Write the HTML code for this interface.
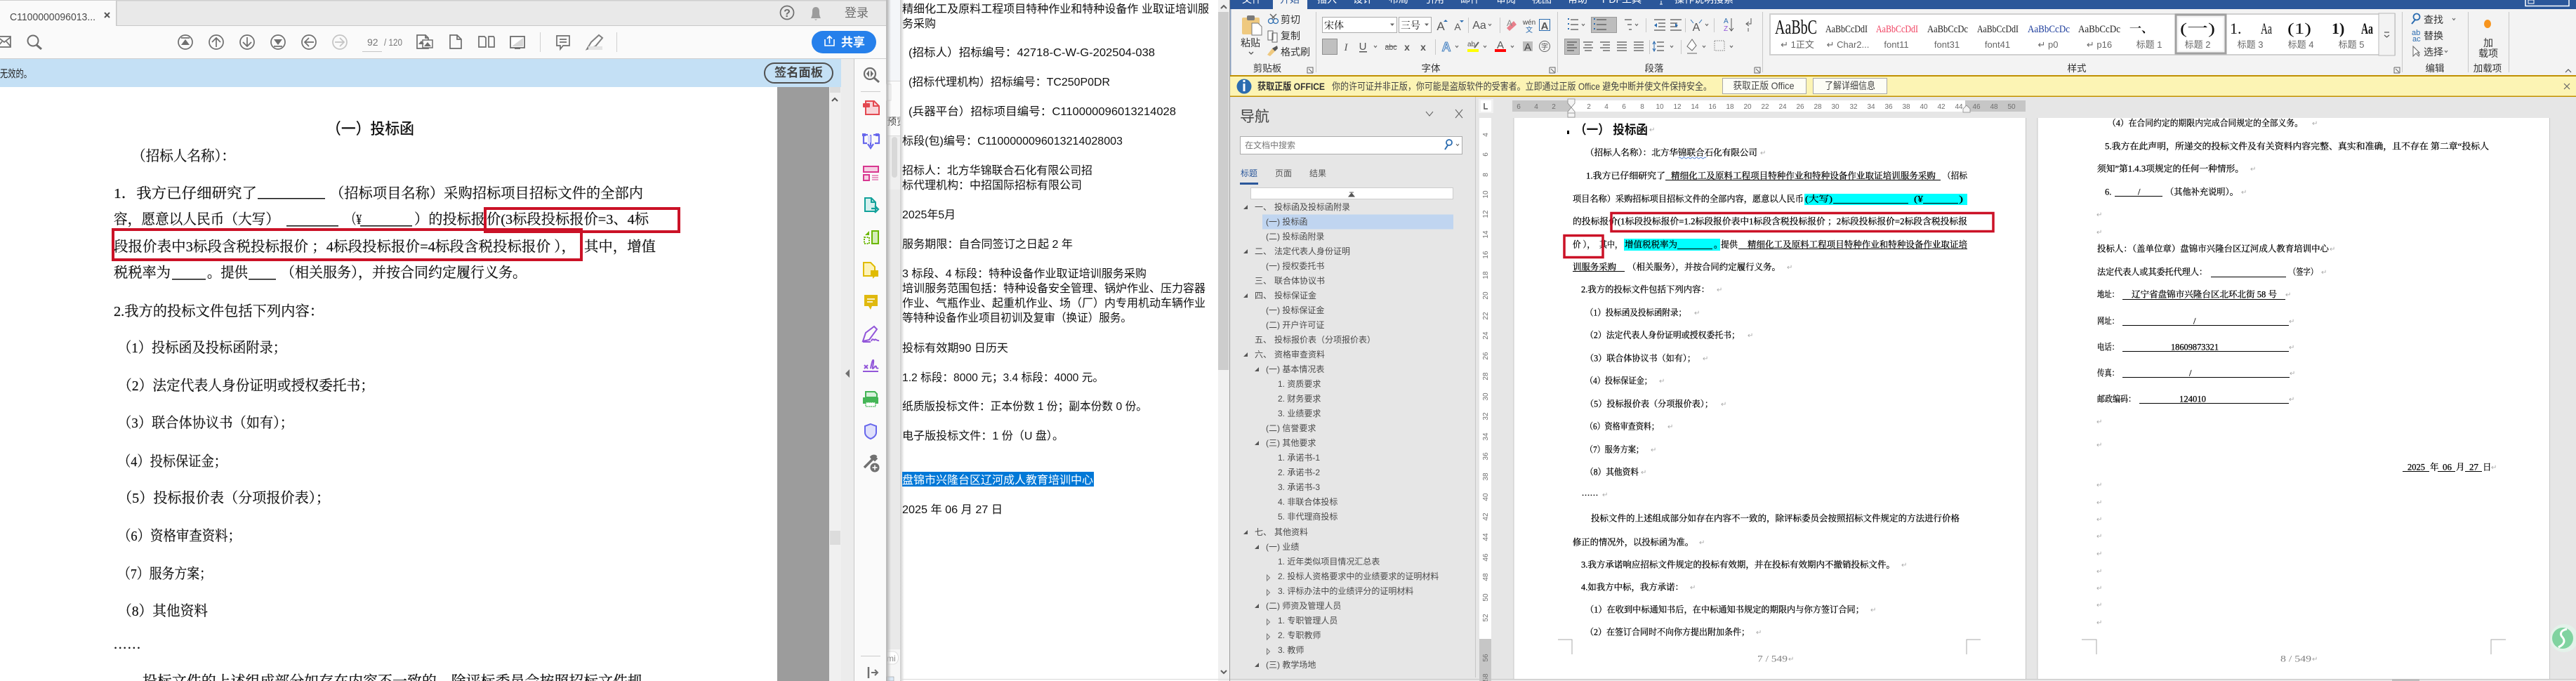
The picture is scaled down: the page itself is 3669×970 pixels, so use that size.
<!DOCTYPE html>
<html lang="zh"><head><meta charset="utf-8"><title>screenshot</title>
<style>
html,body{margin:0;padding:0;background:#e6e6e6;overflow:hidden;width:3669px;height:970px}
svg{display:block}
.s{font-family:"Liberation Serif","Noto Serif CJK SC",serif}
.h{font-family:"Liberation Sans","Noto Sans CJK SC",sans-serif}
.d{font-size:20.5px;fill:#111;stroke:#111;stroke-width:.2px}
.m{font-size:16px;fill:#111}
.w{font-size:12.5px;fill:#000;stroke:#000;stroke-width:.25px}
.n{font-size:12px;fill:#4a4a4a}
.r{font-size:10px;fill:#6e6e6e;text-anchor:middle}
.u{font-size:12px;fill:#444}
.c{text-anchor:middle}
.a{font-family:"DejaVu Sans",sans-serif;font-size:10px;fill:#a8a8a8}
.g{fill:none;stroke:#6e6e6e;stroke-width:1.7}
</style></head><body>
<svg xmlns="http://www.w3.org/2000/svg" width="3669" height="970" viewBox="0 0 3669 970">
<defs>
<linearGradient id="sh" x1="0" x2="1" y1="0" y2="0"><stop offset="0" stop-color="#b5b5b5"/><stop offset="1" stop-color="#b5b5b5" stop-opacity="0"/></linearGradient>
<linearGradient id="sh2" x1="1" x2="0" y1="0" y2="0"><stop offset="0" stop-color="#b5b5b5"/><stop offset="1" stop-color="#b5b5b5" stop-opacity="0"/></linearGradient>
</defs>

<!-- ============ ACROBAT PANEL ============ -->
<rect x="0" y="0" width="1263" height="970" fill="#fff"/>
<rect x="0" y="0" width="1263" height="37" fill="#e9e9e9"/>
<rect x="0" y="0" width="1263" height="1.5" fill="#cfcfcf"/>
<rect x="0" y="1" width="165" height="36" fill="#fafafa"/>
<rect x="165" y="1" width="1.5" height="36" fill="#c8c8c8"/>
<rect x="166" y="36" width="1097" height="1.5" fill="#c8c8c8"/>
<text class="h" x="14" y="29" font-size="15" fill="#4b4b4b" textLength="122" lengthAdjust="spacingAndGlyphs">C1100000096013...</text>
<path d="M149 18l7 7M156 18l-7 7" stroke="#555" stroke-width="2"/>
<rect x="0" y="37" width="1263" height="46" fill="#fafafa"/>
<rect x="0" y="83" width="1263" height="1.5" fill="#cfcfcf"/>
<!-- toolbar left -->
<path class="g" d="M-3 52H15V67H-3ZM-3 53L6 60L15 53M-3 66L3 59M15 66L9 59"/>
<circle class="g" cx="47" cy="58" r="7.5" style="stroke-width:2"/><path d="M52 64L59 70" stroke="#6e6e6e" stroke-width="3"/>
<g class="g">
<circle cx="264" cy="60" r="10"/><circle cx="308" cy="60" r="10"/><circle cx="352" cy="60" r="10"/><circle cx="396" cy="60" r="10"/><circle cx="440" cy="60" r="10"/>
<path d="M258 54H270" /><path d="M308 67V54M302 60L308 54L314 60"/><path d="M352 53V66M346 60L352 66L358 60"/><path d="M390 66H402"/><path d="M447 60H434M440 54L434 60L440 66"/>
</g>
<path d="M264 56L270 64H258Z M396 64L390 56H402Z" fill="#6e6e6e"/>
<g fill="none" stroke="#c4c4c4" stroke-width="1.7"><circle cx="484" cy="60" r="10"/><path d="M477 60H490M484 54L490 60L484 66"/></g>
<text class="h" x="523" y="65" font-size="14" fill="#777">92</text>
<text class="h" x="547" y="65" font-size="14" fill="#777" textLength="26" lengthAdjust="spacingAndGlyphs">/ 120</text>
<rect x="516" y="73" width="28" height="1" fill="#c6c6c6"/>
<path class="g" d="M594 50H606L610 54V69H594ZM606 50V54H610"/><rect x="602" y="57" width="14" height="11" fill="#fafafa" stroke="#6e6e6e" stroke-width="1.5"/><path d="M596 63L600 58L604 63ZM604 66L609 60L614 66Z" fill="#6e6e6e"/>
<path class="g" d="M641 50H651L657 56V69H641ZM651 50V56H657"/>
<path class="g" d="M682 52H690L692 54V67H682ZM696 52H703L704 54V67H696Z"/>
<rect x="727" y="52" width="20" height="16" fill="#fff" stroke="#6e6e6e" stroke-width="1.8"/><path d="M729 66L745 54V66Z" fill="#d6d6d6"/><rect x="733" y="68" width="8" height="2" fill="#6e6e6e"/>
<rect x="769" y="46" width="1" height="28" fill="#d0d0d0"/>
<path class="g" d="M793 51H811V65H802L798 70V65H793ZM797 56H807M797 60H807"/>
<path d="M836 70L842 60L853 50L858 54L848 66Z" fill="#fff" stroke="#808080" stroke-width="2"/><rect x="838" y="66" width="20" height="5" fill="#e4e4e4"/>
<rect x="878" y="46" width="1" height="28" fill="#d0d0d0"/>
<rect x="1156" y="44" width="92" height="32" rx="16" fill="#2680eb"/>
<path d="M1175 56V65H1188V56M1181.500 62V52M1178 55L1181.500 51.500L1185 55" fill="none" stroke="#fff" stroke-width="1.6"/>
<text class="h" x="1198" y="66" font-size="17" font-weight="700" fill="#fff">共享</text>
<circle class="g" cx="1121" cy="18" r="9.500"/><text class="h c" x="1121" y="24" font-size="16" font-weight="700" fill="#6e6e6e">?</text>
<path d="M1155 26C1157 22 1157 20 1157 16C1157 12 1159 10 1162 10C1165 10 1167 12 1167 16C1167 20 1167 22 1169 26ZM1160 27.500H1164L1162 29Z" fill="#9c9c9c"/>
<text class="h" x="1203" y="24" font-size="17" fill="#6e6e6e">登录</text>
<!-- blue band -->
<rect x="0" y="84" width="1198" height="40" fill="#c4e0f5"/>
<text class="h" x="0" y="110" font-size="15" fill="#222" textLength="45" lengthAdjust="spacingAndGlyphs">无效的。</text>
<rect x="1089" y="90" width="97" height="28" rx="14" fill="#c4e0f5" stroke="#505050" stroke-width="2"/>
<text class="h" x="1103" y="109" font-size="17" font-weight="700" fill="#444" textLength="69" lengthAdjust="spacingAndGlyphs">签名面板</text>
<!-- doc -->
<rect x="1107" y="124" width="74" height="846" fill="#9c9c9c"/>
<rect x="1181" y="124" width="17" height="846" fill="#f0f0f0"/>
<rect x="1182" y="124" width="15" height="8" fill="#dcdcdc"/>
<path d="M1185 144L1189 140L1193 144" fill="none" stroke="#555" stroke-width="2"/>
<rect x="1182" y="756" width="15" height="20" fill="#dcdcdc"/>
<rect x="1198" y="84" width="18" height="886" fill="#ececec"/>
<rect x="1216" y="84" width="1.500" height="886" fill="#c8c8c8"/>
<path d="M1210 526V538L1204 532Z" fill="#707070"/>
<rect x="1217" y="84" width="46" height="886" fill="#fafafa"/>
<rect x="1262" y="0" width="1.500" height="970" fill="#bdbdbd"/>

<text class="h" x="465" y="191" font-size="22" font-weight="500" fill="#111" textLength="125" lengthAdjust="spacingAndGlyphs">（一）投标函</text>
<g class="s d">
<text x="188" y="229" textLength="147" lengthAdjust="spacingAndGlyphs">（招标人名称）：</text>
<text x="162" y="282" textLength="204" lengthAdjust="spacingAndGlyphs">1．我方已仔细研究了</text>
<text x="470" y="282" textLength="446" lengthAdjust="spacingAndGlyphs">（招标项目名称）采购招标项目招标文件的全部内</text>
<text x="162" y="319" textLength="236" lengthAdjust="spacingAndGlyphs">容，愿意以人民币（大写）</text>
<text x="492" y="319" textLength="23" lengthAdjust="spacingAndGlyphs">（¥</text>
<text x="590" y="319" textLength="101" lengthAdjust="spacingAndGlyphs">）的投标报</text>
<text x="693" y="319" textLength="231" lengthAdjust="spacingAndGlyphs">价(3标段投标报价=3、4标</text>
<text x="162" y="358" textLength="658" lengthAdjust="spacingAndGlyphs">段报价表中3标段含税投标报价 ；4标段投标报价=4标段含税投标报价 ），</text>
<text x="832" y="358" textLength="102" lengthAdjust="spacingAndGlyphs">其中，增值</text>
<text x="162" y="395" textLength="81" lengthAdjust="spacingAndGlyphs">税税率为</text>
<text x="295" y="395" textLength="58" lengthAdjust="spacingAndGlyphs">。提供</text>
<text x="400" y="395" textLength="350" lengthAdjust="spacingAndGlyphs">（相关服务），并按合同约定履行义务。</text>
<text x="162" y="450" textLength="299" lengthAdjust="spacingAndGlyphs">2.我方的投标文件包括下列内容：</text>
<text x="168" y="502" textLength="240" lengthAdjust="spacingAndGlyphs">（1）投标函及投标函附录；</text>
<text x="168" y="556" textLength="365" lengthAdjust="spacingAndGlyphs">（2）法定代表人身份证明或授权委托书；</text>
<text x="168" y="609" textLength="250" lengthAdjust="spacingAndGlyphs">（3）联合体协议书（如有）；</text>
<text x="168" y="664" textLength="155" lengthAdjust="spacingAndGlyphs">（4）投标保证金；</text>
<text x="168" y="716" textLength="302" lengthAdjust="spacingAndGlyphs">（5）投标报价表（分项报价表）；</text>
<text x="168" y="770" textLength="175" lengthAdjust="spacingAndGlyphs">（6）资格审查资料；</text>
<text x="168" y="824" textLength="134" lengthAdjust="spacingAndGlyphs">（7）服务方案；</text>
<text x="168" y="877" textLength="128" lengthAdjust="spacingAndGlyphs">（8）其他资料</text>
<text x="162" y="924" textLength="38" lengthAdjust="spacing">......</text>
<text x="203" y="977" textLength="712" lengthAdjust="spacingAndGlyphs">投标文件的上述组成部分如存在内容不一致的，除评标委员会按照招标文件规</text>
</g>
<g fill="#111"><rect x="367" y="282" width="96" height="1.500"/><rect x="408" y="321" width="74" height="1.500"/><rect x="513" y="321" width="74" height="1.500"/><rect x="245" y="397" width="48" height="1.500"/><rect x="354" y="397" width="39" height="1.500"/></g>
<rect x="691" y="297" width="276" height="33" fill="none" stroke="#cb1227" stroke-width="4"/>
<rect x="161" y="327" width="667" height="43" fill="none" stroke="#cb1227" stroke-width="4"/>

<!-- sidebar icons -->
<circle class="g" cx="1239" cy="105" r="8" style="stroke-width:2.200"/><path d="M1245 111L1252 117" stroke="#6e6e6e" stroke-width="3"/><path d="M1238 100L1234 105L1238 110ZM1240 100L1244 105L1240 110Z" fill="#6e6e6e"/>
<rect x="1226" y="130" width="28" height="1" fill="#ccc"/>
<path d="M1233 144H1245L1252 151V163H1233Z" fill="#f8d4d8" stroke="#e34850" stroke-width="2"/><rect x="1229" y="147" width="10" height="6" rx="1" fill="#e34850"/><path d="M1244 144V151H1252" fill="none" stroke="#e34850" stroke-width="2"/>
<g fill="none" stroke="#6767ec" stroke-width="2.200"><path d="M1236 192H1230V204H1235M1244 192H1252V204H1246"/><path d="M1240 192V208M1236 205L1240 211L1244 205" /></g><rect x="1236" y="193" width="4" height="10" fill="#dcdcfc"/><rect x="1228" y="190" width="5" height="4" fill="#6767ec"/><rect x="1247" y="190" width="5" height="4" fill="#6767ec"/>
<g stroke="#d83790" stroke-width="2" fill="#f6d0e4"><rect x="1230" y="237" width="21" height="8"/><rect x="1230" y="249" width="8" height="8"/></g><path d="M1242 250H1251M1242 253H1251M1242 256H1251" stroke="#d83790"/>
<path d="M1232 282H1241L1247 288V301H1232Z" fill="#d5f0ee" stroke="#12a19a" stroke-width="2"/><path d="M1241 282V288H1247" fill="none" stroke="#12a19a" stroke-width="2"/><path d="M1241 297H1249M1246 293L1251 298L1246 303" fill="none" stroke="#12a19a" stroke-width="2.200"/>
<rect x="1242" y="329" width="9" height="18" fill="#d4edb8" stroke="#6bb700" stroke-width="2"/><path d="M1231 338H1238V347H1231Z" fill="none" stroke="#6bb700" stroke-width="2" stroke-dasharray="2 1.500"/><path d="M1238 329L1232 335H1238Z" fill="#6bb700"/>
<path d="M1230 374H1240L1246 380V393H1230Z" fill="#fdf3b8" stroke="#e0bb00" stroke-width="2"/><rect x="1240" y="385" width="11" height="9" fill="#e0bb00"/><path d="M1243 394V397L1246 394Z" fill="#e0bb00"/>
<path d="M1231 420H1250V436H1242L1240 441L1237 436H1231Z" fill="#e0b90f"/><path d="M1235 426H1246M1235 430H1243" stroke="#fff" stroke-width="1.500"/>
<path d="M1229 486L1233 474L1245 465L1249 469L1238 484ZM1241 486C1243 480 1245 486 1246 484C1247 482 1249 486 1252 485" fill="none" stroke="#9256d9" stroke-width="2"/><path d="M1229 487H1240" stroke="#9256d9" stroke-width="2"/>
<path d="M1231 520L1236 525M1236 520L1231 525" stroke="#9256d9" stroke-width="2"/><path d="M1240 525C1242 515 1243 512 1244 513C1245 516 1242 524 1243 525C1245 525 1246 520 1248 522C1248 525 1250 525 1251 524" fill="none" stroke="#9256d9" stroke-width="2"/><rect x="1229" y="528" width="22" height="2" fill="#9256d9"/>
<rect x="1229" y="566" width="22" height="9" fill="#44b556"/><path d="M1233 566V558H1246L1249 561V566Z" fill="#d8f0dc" stroke="#44b556" stroke-width="2"/><rect x="1233" y="573" width="14" height="6" fill="#fff" stroke="#44b556" stroke-dasharray="1.500 1" stroke-width="1.500"/>
<path d="M1240 604L1248 607V616C1248 621 1243 624 1240 625C1237 624 1232 621 1232 616V607Z" fill="#dfe0fb" stroke="#6767ec" stroke-width="2"/>
<path d="M1231 666L1243 654L1241 651C1243 649 1246 649 1247 650L1244 653L1246 655L1249 652" fill="none" stroke="#707070" stroke-width="3.500"/><circle cx="1246" cy="666" r="6.500" fill="#707070"/><path d="M1246 662.500V669.500M1242.500 666H1249.500" stroke="#fff" stroke-width="1.500"/>
<rect x="1226" y="934" width="28" height="1" fill="#ccc"/>
<path d="M1237 950V966" stroke="#707070" stroke-width="2.500"/><path d="M1241 958H1249M1246 954L1250 958L1246 962" fill="none" stroke="#707070" stroke-width="2"/>

<!-- ============ SLIVER between windows ============ -->
<rect x="1263" y="0" width="19" height="970" fill="#e9e9e9"/>
<rect x="1263" y="0" width="19" height="115" fill="#f4f6f9"/>
<rect x="1263" y="115" width="19" height="78" fill="#fbfbfb"/>
<rect x="1263" y="115" width="19" height="1" fill="#dadada"/>
<rect x="1263" y="120" width="6" height="23" fill="#fff" stroke="#ddd"/>
<text class="h" x="1263" y="178" font-size="14" fill="#444">预览</text>
<rect x="1263" y="193" width="19" height="1" fill="#dadada"/>
<rect x="1263" y="194" width="19" height="76" fill="#efefef"/>
<rect x="1270" y="195" width="8" height="58" rx="4" fill="#d8d8d8"/>
<rect x="1263" y="925" width="19" height="45" fill="#f6f6f6"/>
<path d="M1263 928H1272C1282 928 1282 946 1272 946H1263" fill="#fff" stroke="#ddd"/>
<text class="h" x="1263" y="942" font-size="12" fill="#888">mi</text>
<rect x="1263" y="964" width="10" height="6" fill="#dbe8f5" stroke="#888" stroke-width=".5"/>
<rect x="1263" y="0" width="6" height="970" fill="url(#sh)"/>

<!-- ============ TEXT VIEWER ============ -->
<rect x="1282" y="0" width="453" height="970" fill="#fff"/>
<rect x="1282" y="0" width="6" height="970" fill="url(#sh)" opacity=".7"/>
<rect x="1735" y="0" width="17" height="970" fill="#f0f0f0"/>
<rect x="1735" y="17" width="15" height="510" fill="#cdcdcd"/>
<path d="M1739 12L1743 8L1747 12M1739 955L1743 959L1747 955" fill="none" stroke="#606060" stroke-width="2"/>
<rect x="1282" y="967" width="470" height="1" fill="#d8d8d8"/>
<rect x="1751" y="0" width="1.500" height="970" fill="#9b9b9b"/>
<g class="h m">
<text x="1285" y="18" textLength="437" lengthAdjust="spacingAndGlyphs">精细化工及原料工程项目特种作业和特种设备作 业取证培训服</text>
<text x="1285" y="39" textLength="48" lengthAdjust="spacingAndGlyphs">务采购</text>
<text x="1294" y="80" textLength="351" lengthAdjust="spacingAndGlyphs">(招标人）招标编号：42718-C-W-G-202504-038</text>
<text x="1294" y="122" textLength="287" lengthAdjust="spacingAndGlyphs">(招标代理机构）招标编号：TC250P0DR</text>
<text x="1294" y="164" textLength="381" lengthAdjust="spacingAndGlyphs">(兵器平台）招标项目编号：C110000096013214028</text>
<text x="1285" y="206" textLength="314" lengthAdjust="spacingAndGlyphs">标段(包)编号：C1100000096013214028003</text>
<text x="1285" y="248" textLength="271" lengthAdjust="spacingAndGlyphs">招标人：北方华锦联合石化有限公司招</text>
<text x="1285" y="269" textLength="256" lengthAdjust="spacingAndGlyphs">标代理机构：中招国际招标有限公司</text>
<text x="1285" y="311" textLength="76" lengthAdjust="spacingAndGlyphs">2025年5月</text>
<text x="1285" y="353" textLength="243" lengthAdjust="spacingAndGlyphs">服务期限：自合同签订之日起 2 年</text>
<text x="1285" y="395" textLength="348" lengthAdjust="spacingAndGlyphs">3 标段、4 标段：特种设备作业取证培训服务采购</text>
<text x="1285" y="416" textLength="432" lengthAdjust="spacingAndGlyphs">培训服务范围包括：特种设备安全管理、锅炉作业、压力容器</text>
<text x="1285" y="437" textLength="432" lengthAdjust="spacingAndGlyphs">作业、气瓶作业、起重机作业、场（厂）内专用机动车辆作业</text>
<text x="1285" y="458" textLength="327" lengthAdjust="spacingAndGlyphs">等特种设备作业项目初训及复审（换证）服务。</text>
<text x="1285" y="501" textLength="151" lengthAdjust="spacingAndGlyphs">投标有效期90 日历天</text>
<text x="1285" y="543" textLength="287" lengthAdjust="spacingAndGlyphs">1.2 标段：8000 元；3.4 标段：4000 元。</text>
<text x="1285" y="584" textLength="349" lengthAdjust="spacingAndGlyphs">纸质版投标文件：正本份数 1 份；副本份数 0 份。</text>
<text x="1285" y="626" textLength="230" lengthAdjust="spacingAndGlyphs">电子版投标文件：1 份（U 盘）。</text>
<text x="1285" y="731" textLength="143" lengthAdjust="spacingAndGlyphs">2025 年 06 月 27 日</text>
</g>
<rect x="1285" y="672" width="273" height="21" fill="#0078d7"/>
<text class="h" x="1285" y="689" font-size="16" fill="#fff" textLength="272" lengthAdjust="spacingAndGlyphs">盘锦市兴隆台区辽河成人教育培训中心</text>

<!-- ============ WORD ============ -->
<rect x="1752" y="0" width="1917" height="970" fill="#e6e6e6"/>
<rect x="1752" y="0" width="1917" height="13" fill="#2b579a"/>
<rect x="1813" y="0" width="49" height="13" fill="#f3f3f3"/>
<g class="h" font-size="14" fill="#fff">
<text x="1769" y="4">文件</text><text x="1823" y="4" fill="#2b579a">开始</text><text x="1876" y="4">插入</text><text x="1927" y="4">设计</text><text x="1978" y="4">布局</text><text x="2029" y="4">引用</text><text x="2080" y="4">邮件</text><text x="2131" y="4">审阅</text><text x="2182" y="4">视图</text><text x="2233" y="4">帮助</text><text x="2282" y="4">PDF工具</text><text x="2385" y="4">操作说明搜索</text>
</g>
<path d="M2366 1V6M2364 6H2368" stroke="#fff"/>
<path d="M3597 0V8.500H3659V0" fill="none" stroke="#fff" stroke-width="1.500"/>
<rect x="3601" y="0" width="8" height="5" fill="none" stroke="#fff"/>
<rect x="1752" y="13" width="1917" height="94" fill="#f3f3f3"/>
<rect x="1752" y="13" width="1.500" height="94" fill="#2b579a" opacity=".5"/>
<!-- dividers -->
<g fill="#c8c8c8"><rect x="1874" y="17" width="1" height="86"/><rect x="2218" y="17" width="1" height="86"/><rect x="2510" y="17" width="1" height="86"/><rect x="3421" y="17" width="1" height="86"/><rect x="3515" y="17" width="1" height="86"/><rect x="3573" y="17" width="1" height="86"/>
<rect x="2091" y="25" width="1" height="22"/><rect x="2136" y="25" width="1" height="22"/><rect x="2044" y="56" width="1" height="22"/><rect x="2344" y="26" width="1" height="20"/><rect x="2400" y="26" width="1" height="20"/><rect x="2441" y="26" width="1" height="20"/><rect x="2349" y="57" width="1" height="20"/><rect x="2394" y="57" width="1" height="20"/></g>
<!-- clipboard -->
<rect x="1769" y="25" width="25" height="24" rx="2" fill="#efc97f"/><rect x="1776" y="22" width="11" height="7" rx="2" fill="#7a7a7a"/>
<path d="M1783 33H1792L1797 38V50H1783Z" fill="#fff" stroke="#777"/>
<text class="h c" x="1781" y="66" font-size="14" fill="#333">粘贴</text>
<path d="M1779 74L1782 77L1785 74" fill="none" stroke="#555" stroke-width="1.300"/>
<circle cx="1810" cy="30" r="3.500" fill="none" stroke="#2b6cb0" stroke-width="1.300"/><circle cx="1817" cy="30" r="3.500" fill="none" stroke="#2b6cb0" stroke-width="1.300"/><path d="M1809 20L1816 27M1818 20L1811 27" stroke="#666" stroke-width="1.500"/>
<path d="M1806 44H1813V57H1806ZM1812 47H1819V60H1812Z" fill="#fff" stroke="#666"/>
<path d="M1805 78L1812 69L1816 73L1809 80Z" fill="#efc97f"/><path d="M1812 69L1819 65L1820 69L1816 73Z" fill="#555"/>
<g class="h" font-size="14" fill="#333"><text x="1824" y="33">剪切</text><text x="1824" y="56">复制</text><text x="1824" y="79">格式刷</text></g>
<g class="h c" font-size="13.500" fill="#333"><text x="1805" y="102">剪贴板</text><text x="2038" y="102">字体</text><text x="2356" y="102">段落</text><text x="2958" y="102">样式</text><text x="3468" y="102">编辑</text><text x="3543" y="102">加载项</text></g>
<g fill="none" stroke="#666"><path d="M1862 96H1870V104M1862 96V104H1870M1864 98L1869 103"/><path d="M2207 96H2215V104M2207 96V104H2215M2209 98L2214 103"/><path d="M2499 96H2507V104M2499 96V104H2507M2501 98L2506 103"/><path d="M3410 96H3418V104M3410 96V104H3418M3412 98L3417 103"/></g>
<!-- font group -->
<rect x="1883.500" y="24.500" width="106" height="22" fill="#fff" stroke="#ababab"/><rect x="1992.500" y="24.500" width="46" height="22" fill="#fff" stroke="#ababab"/>
<text class="s" x="1886" y="41" font-size="14" fill="#111">宋体</text><text class="s" x="1995" y="41" font-size="14" fill="#111">三号</text>
<path d="M1980 33.500H1986L1983 37ZM2029 33.500H2035L2032 37Z" fill="#666"/>
<g class="h" fill="#555"><text class="c" x="2052" y="43" font-size="17">A</text><text class="c" x="2076" y="43" font-size="14">A</text><text class="c" x="2107" y="41" font-size="16">Aa</text><text class="c" x="2200" y="42" font-size="15" font-weight="700">A</text>
<text class="c" x="1894" y="72" font-size="15" font-weight="700">B</text><text class="c" x="1917" y="72" font-size="15" font-style="italic" font-family="Liberation Serif">I</text><text class="c" x="1941" y="71" font-size="15">U</text><text class="c" x="1981" y="71" font-size="12" textLength="17" lengthAdjust="spacingAndGlyphs">abc</text><text class="c" x="2004" y="72" font-size="14" font-weight="700">x</text><text class="c" x="2027" y="72" font-size="14" font-weight="700">x</text></g>
<path d="M2056 31L2059 28L2062 31" fill="#2b6cb0"/><path d="M2079 29H2085L2082 32Z" fill="#2b6cb0"/>
<rect x="2192.500" y="27.500" width="15" height="16" fill="none" stroke="#2b6cb0"/>
<path d="M2146 40L2156 30L2160 35L2150 44Z" fill="#e87e8a"/><text class="h" x="2146" y="37" font-size="12" fill="#888">A</text>
<text class="h c" x="2178" y="35" font-size="10" fill="#444">wén</text><text class="h c" x="2178" y="46" font-size="10" fill="#2b6cb0">文</text>
<rect x="1883.500" y="55.500" width="21" height="22" fill="#c0c0c0" stroke="#8f8f8f"/>
<rect x="1936" y="73" width="11" height="1.500" fill="#555"/><path d="M1973 66H1990" stroke="#555"/>
<text class="h c" x="2060" y="73" font-size="18" font-weight="700" fill="#cfe0f5" stroke="#2b6cb0" stroke-width=".8">A</text>
<text class="h" x="2090" y="66" font-size="10" fill="#555">ab</text><path d="M2100 68L2106 60" stroke="#666" stroke-width="2"/><rect x="2090" y="70" width="16" height="4" fill="#ffff00"/>
<text class="h c" x="2137" y="69" font-size="15" fill="#555">A</text><rect x="2129" y="70" width="16" height="4" fill="#f00"/>
<rect x="2169" y="59" width="14" height="14" fill="#bdbdbd"/><text class="h c" x="2176" y="72" font-size="15" fill="#444">A</text>
<circle cx="2200" cy="66" r="7.500" fill="none" stroke="#666"/><text class="h c" x="2200" y="70" font-size="10" fill="#555">字</text>
<g fill="none" stroke="#666" stroke-width="1.100"><path d="M2120 34L2122 36.500L2124 34M1957 65L1959 67.500L1961 65M2073 65L2075 67.500L2077 65M2113 65L2115 67.500L2117 65M2152 65L2154 67.500L2156 65M2253 34L2255 36.500L2257 34M2293 34L2295 36.500L2297 34M2329 34L2331 36.500L2333 34M2429 34L2431 36.500L2433 34M2379 65L2381 67.500L2383 65M2425 65L2427 67.500L2429 65M2464 65L2466 67.500L2468 65M3493 26L3495 28.500L3497 26M3482 72L3484 74.500L3486 72"/></g>
<!-- paragraph -->
<rect x="2266.500" y="24.500" width="36" height="22" fill="#bdbdbd" stroke="#9a9a9a"/><rect x="2228.500" y="55.500" width="21" height="22" fill="#bdbdbd" stroke="#9a9a9a"/>
<g stroke="#555" stroke-width="1.200"><path d="M2237 28H2248M2237 35H2248M2237 42H2248M2274 28H2288M2274 35H2288M2274 42H2288M2314 28H2324M2318 35H2324M2320 42H2324"/><path d="M2356 28H2372M2362 33H2372M2362 38H2372M2356 43H2372M2379 28H2395M2379 33H2389M2379 38H2389M2379 43H2395"/>
<path d="M2232 60H2246M2232 64H2242M2232 68H2246M2232 72H2242M2255 60H2269M2257 64H2267M2255 68H2269M2257 72H2267M2279 60H2293M2283 64H2293M2279 68H2293M2283 72H2293M2303 60H2317M2303 64H2317M2303 68H2317M2303 72H2317M2327 60H2341M2327 64H2341M2327 68H2341M2327 72H2341M2360 60H2370M2360 66H2370M2360 72H2370"/></g>
<path d="M2233 26h2v2h-2zM2233 33h2v2h-2zM2233 40h2v2h-2zM2270 26h2v2h-2zM2270 33h2v2h-2zM2270 40h2v2h-2z" fill="#2b6cb0"/>
<path d="M2354 63L2356 59L2358 63M2356 60V72M2354 69L2356 73L2358 69" fill="none" stroke="#2b6cb0"/>
<path d="M2360 33L2356 36L2360 39Z M2386 33L2390 36L2386 39Z" fill="#2b6cb0"/>
<text class="h c" x="2416" y="44" font-size="16" fill="#555">A</text><path d="M2408 28L2412 33M2424 28L2420 33" stroke="#2b6cb0"/>
<text class="h" x="2455" y="33" font-size="10" fill="#2b6cb0">A</text><text class="h" x="2455" y="44" font-size="10" fill="#9256d9">Z</text><path d="M2466 26V43M2463 40L2466 44L2469 40" fill="none" stroke="#555"/>
<path d="M2494 26V34H2488M2491 31L2487 34L2491 37M2490 40V45" fill="none" stroke="#555"/>
<path d="M2410 56L2403 66L2410 72L2416 65ZM2403 76H2417" fill="#fff" stroke="#666"/>
<rect x="2442" y="58" width="14" height="14" fill="none" stroke="#777" stroke-dasharray="1.500 1.500"/>
<!-- styles gallery -->
<rect x="2521" y="20" width="890" height="58" fill="#fff" stroke="#d0d0d0" stroke-width="2"/>
<rect x="3099" y="21" width="71" height="55" fill="#f5f5f5" stroke="#a0a0a0" stroke-width="3"/>
<rect x="3103" y="25" width="63" height="47" fill="#fff"/>
<g class="s">
<text x="2528" y="48" font-size="28" fill="#111" textLength="60" lengthAdjust="spacingAndGlyphs">AaBbC</text>
<text x="2600" y="46" font-size="15" fill="#222" textLength="60" lengthAdjust="spacingAndGlyphs">AaBbCcDdI</text>
<text x="2672" y="46" font-size="15" fill="#f04060" textLength="60" lengthAdjust="spacingAndGlyphs">AaBbCcDdI</text>
<text x="2745" y="46" font-size="15" fill="#222" textLength="58" lengthAdjust="spacingAndGlyphs">AaBbCcDc</text>
<text x="2816" y="46" font-size="15" fill="#222" textLength="59" lengthAdjust="spacingAndGlyphs">AaBbCcDdI</text>
<text x="2888" y="46" font-size="15" fill="#1a3a9a" textLength="60" lengthAdjust="spacingAndGlyphs">AaBbCcDc</text>
<text x="2960" y="46" font-size="15" fill="#222" textLength="60" lengthAdjust="spacingAndGlyphs">AaBbCcDc</text>
<text x="3033" y="46" font-size="17" fill="#111" font-weight="700">一、</text>
<text x="3105" y="48" font-size="22" fill="#111" textLength="50" lengthAdjust="spacingAndGlyphs">(一)</text>
<text x="3176" y="48" font-size="22" fill="#111">1.</text>
<text x="3220" y="48" font-size="22" fill="#111" textLength="16" lengthAdjust="spacingAndGlyphs">Aa</text>
<text x="3258" y="48" font-size="22" fill="#111" textLength="34" lengthAdjust="spacingAndGlyphs">(1)</text>
<text x="3321" y="48" font-size="22" fill="#111" font-weight="700">1)</text>
<text x="3363" y="48" font-size="22" fill="#111" font-weight="700" textLength="17" lengthAdjust="spacingAndGlyphs">Aa</text>
</g>
<g class="h c" font-size="13" fill="#666">
<text x="2560" y="68">↵ 1正文</text><text x="2632" y="68">↵ Char2...</text><text x="2701" y="68">font11</text><text x="2773" y="68">font31</text><text x="2845" y="68">font41</text><text x="2917" y="68">↵ p0</text><text x="2990" y="68">↵ p16</text><text x="3061" y="68">标题 1</text><text x="3130" y="68">标题 2</text><text x="3205" y="68">标题 3</text><text x="3277" y="68">标题 4</text><text x="3349" y="68">标题 5</text>
</g>
<rect x="3388" y="19" width="23" height="60" fill="#f3f3f3" stroke="#b8b8b8"/>
<path d="M3396 46H3403M3396 50L3399.500 53L3403 50" fill="none" stroke="#555" stroke-width="1.200"/>
<!-- editing -->
<circle cx="3442" cy="24" r="4.500" fill="none" stroke="#2b6cb0" stroke-width="1.800"/><path d="M3440 28L3435 34" stroke="#2b6cb0" stroke-width="2"/>
<text class="h" x="3435" y="50" font-size="11" fill="#2b6cb0">ab</text><text class="h" x="3436" y="59" font-size="11" fill="#2b6cb0">ac</text>
<path d="M3437 66V80L3441 76L3445 80L3446 78L3443 75H3446Z" fill="#fff" stroke="#666"/>
<g class="h" font-size="14" fill="#333"><text x="3452" y="33">查找</text><text x="3452" y="56">替换</text><text x="3452" y="79">选择</text></g>
<ellipse cx="3543" cy="34" rx="5" ry="6" fill="#f7941d"/>
<text class="h c" x="3544" y="66" font-size="14" fill="#333">加</text><text class="h c" x="3544" y="81" font-size="14" fill="#333">载项</text>
<path d="M3654 103L3658 99L3662 103" fill="none" stroke="#555" stroke-width="1.200"/>
<!-- yellow bar -->
<rect x="1752" y="107" width="1917" height="31" fill="#c09000"/>
<rect x="1752" y="109" width="1917" height="27.500" fill="#fcf4b4"/>
<circle cx="1772" cy="123" r="10.500" fill="#2b6cb0"/><rect x="1770.500" y="119" width="3" height="11" fill="#fff"/><rect x="1770.500" y="114" width="3" height="3" fill="#fff"/>
<text class="h" x="1791" y="128" font-size="14" font-weight="700" fill="#333" textLength="96" lengthAdjust="spacingAndGlyphs">获取正版 OFFICE</text>
<text class="h" x="1897" y="128" font-size="14" fill="#444" textLength="541" lengthAdjust="spacingAndGlyphs">你的许可证并非正版，你可能是盗版软件的受害者。立即通过正版 Office 避免中断并使文件保持安全。</text>
<rect x="2453.500" y="111.500" width="119" height="22" fill="#fdfdf5" stroke="#a8a8a8"/><rect x="2582.500" y="111.500" width="105" height="22" fill="#fdfdf5" stroke="#a8a8a8"/>
<text class="h c" x="2512" y="127" font-size="14" fill="#444" textLength="87" lengthAdjust="spacingAndGlyphs">获取正版 Office</text>
<text class="h c" x="2635" y="127" font-size="14" fill="#444" textLength="72" lengthAdjust="spacingAndGlyphs">了解详细信息</text>
<path d="M3652 119L3660 127M3660 119L3652 127" stroke="#666" stroke-width="1.200"/>

<!-- nav pane -->
<rect x="1752" y="138" width="349" height="832" fill="#e6e6e6"/>
<rect x="2101" y="138" width="1" height="827" fill="#c6c6c6"/>
<text class="h" x="1766" y="173" font-size="21" fill="#444">导航</text>
<path d="M2031 159L2036 165L2041 159M2073 156L2083 168M2083 156L2073 168" fill="none" stroke="#666" stroke-width="1.100"/>
<rect x="1766.500" y="194.500" width="316" height="25" fill="#fff" stroke="#ababab"/>
<text class="h" x="1773" y="211" font-size="12" fill="#777">在文档中搜索</text>
<circle cx="2064" cy="203" r="4" fill="none" stroke="#2b6cb0" stroke-width="1.800"/><path d="M2062 207L2058 213" stroke="#2b6cb0" stroke-width="2"/><path d="M2074 205L2076 207.500L2078 205" fill="none" stroke="#555"/>
<text class="h" x="1767" y="251" font-size="12" fill="#2b579a">标题</text><text class="h" x="1816" y="251" font-size="12" fill="#555">页面</text><text class="h" x="1865" y="251" font-size="12" fill="#555">结果</text>
<rect x="1766" y="260" width="26" height="3" fill="#2b579a"/>
<rect x="1781.500" y="267.500" width="288" height="16" fill="#fff" stroke="#ccc"/>
<path d="M1922 274H1928M1925 275L1921 280H1929Z" stroke="#555" fill="#555"/>
<rect x="1798" y="305.500" width="272" height="21" fill="#c0d5f0"/>
<g class="h n">
<text x="1787" y="299">一、</text><text x="1815" y="299">投标函及投标函附录</text>
<text x="1803" y="320">(一) 投标函</text>
<text x="1803" y="341">(二) 投标函附录</text>
<text x="1787" y="362">二、</text><text x="1815" y="362">法定代表人身份证明</text>
<text x="1803" y="383">(一) 授权委托书</text>
<text x="1787" y="404">三、</text><text x="1815" y="404">联合体协议书</text>
<text x="1787" y="425">四、</text><text x="1815" y="425">投标保证金</text>
<text x="1803" y="446">(一) 投标保证金</text>
<text x="1803" y="467">(二) 开户许可证</text>
<text x="1787" y="488">五、</text><text x="1815" y="488">投标报价表（分项报价表）</text>
<text x="1787" y="509">六、</text><text x="1815" y="509">资格审查资料</text>
<text x="1803" y="530">(一) 基本情况表</text>
<text x="1820" y="551">1. 资质要求</text>
<text x="1820" y="572">2. 财务要求</text>
<text x="1820" y="593">3. 业绩要求</text>
<text x="1803" y="614">(二) 信誉要求</text>
<text x="1803" y="635">(三) 其他要求</text>
<text x="1820" y="656">1. 承诺书-1</text>
<text x="1820" y="677">2. 承诺书-2</text>
<text x="1820" y="698">3. 承诺书-3</text>
<text x="1820" y="719">4. 非联合体投标</text>
<text x="1820" y="740">5. 非代理商投标</text>
<text x="1787" y="762">七、</text><text x="1815" y="762">其他资料</text>
<text x="1803" y="783">(一) 业绩</text>
<text x="1820" y="804">1. 近年类似项目情况汇总表</text>
<text x="1820" y="825">2. 投标人资格要求中的业绩要求的证明材料</text>
<text x="1820" y="846">3. 评标办法中的业绩评分的证明材料</text>
<text x="1803" y="867">(二) 师资及管理人员</text>
<text x="1820" y="888">1. 专职管理人员</text>
<text x="1820" y="909">2. 专职教师</text>
<text x="1820" y="930">3. 教师</text>
<text x="1803" y="951">(三) 教学场地</text>
</g>
<g fill="#555">
<path d="M1771 298L1777 292V298ZM1771 361L1777 355V361ZM1771 424L1777 418V424ZM1771 508L1777 502V508ZM1771 761L1777 755V761Z"/>
<path d="M1787 529L1793 523V529ZM1787 634L1793 628V634ZM1787 782L1793 776V782ZM1787 866L1793 860V866ZM1787 950L1793 944V950Z"/>
</g>
<g fill="none" stroke="#777"><path d="M1804.500 819L1808.500 823L1804.500 827ZM1804.500 840L1808.500 844L1804.500 848ZM1804.500 882L1808.500 886L1804.500 890ZM1804.500 903L1808.500 907L1804.500 911ZM1804.500 924L1808.500 928L1804.500 932Z"/></g>

<!-- rulers -->
<rect x="2106" y="141" width="21" height="20" fill="#f1f1f1"/><rect x="2109" y="143" width="15" height="16" fill="#fff"/><path d="M2114 147V155H2119" fill="none" stroke="#555" stroke-width="1.500"/>
<rect x="2154" y="143" width="84" height="16" fill="#c6c6c6"/><rect x="2238" y="143" width="561" height="16" fill="#fff"/><rect x="2799" y="143" width="86" height="16" fill="#c6c6c6"/>
<g class="h r">
<text x="2163" y="155">6</text><text x="2188" y="155">4</text><text x="2213" y="155">2</text>
<text x="2263" y="155">2</text><text x="2288" y="155">4</text><text x="2313" y="155">6</text><text x="2339" y="155">8</text><text x="2364" y="155">10</text><text x="2389" y="155">12</text><text x="2414" y="155">14</text><text x="2439" y="155">16</text><text x="2464" y="155">18</text><text x="2489" y="155">20</text><text x="2514" y="155">22</text><text x="2539" y="155">24</text><text x="2564" y="155">26</text><text x="2589" y="155">28</text><text x="2614" y="155">30</text><text x="2640" y="155">32</text><text x="2665" y="155">34</text><text x="2690" y="155">36</text><text x="2715" y="155">38</text><text x="2740" y="155">40</text><text x="2765" y="155">42</text><text x="2790" y="155">44</text><text x="2815" y="155">46</text><text x="2840" y="155">48</text><text x="2865" y="155">50</text>
</g>
<path d="M2233 141H2243V147L2238 153L2243 159V167H2233V159L2238 153L2233 147Z" fill="#f4f4f4" stroke="#888" stroke-width=".8"/><path d="M2233 161H2243" stroke="#888" stroke-width=".8"/>
<path d="M2796 160V155L2801 150L2806 155V160Z" fill="#f4f4f4" stroke="#888" stroke-width=".8"/>
<rect x="2107" y="168" width="17" height="742" fill="#fff"/><rect x="2107" y="910" width="17" height="60" fill="#c6c6c6"/>
<g class="h r" style="font-size:10px">
<text transform="translate(2119 192) rotate(-90)">4</text><text transform="translate(2119 220) rotate(-90)">6</text><text transform="translate(2119 249) rotate(-90)">8</text><text transform="translate(2119 277) rotate(-90)">10</text><text transform="translate(2119 305) rotate(-90)">12</text><text transform="translate(2119 334) rotate(-90)">14</text><text transform="translate(2119 363) rotate(-90)">16</text><text transform="translate(2119 392) rotate(-90)">18</text><text transform="translate(2119 421) rotate(-90)">20</text><text transform="translate(2119 450) rotate(-90)">22</text><text transform="translate(2119 478) rotate(-90)">24</text><text transform="translate(2119 507) rotate(-90)">26</text><text transform="translate(2119 536) rotate(-90)">28</text><text transform="translate(2119 565) rotate(-90)">30</text><text transform="translate(2119 593) rotate(-90)">32</text><text transform="translate(2119 622) rotate(-90)">34</text><text transform="translate(2119 650) rotate(-90)">36</text><text transform="translate(2119 679) rotate(-90)">38</text><text transform="translate(2119 708) rotate(-90)">40</text><text transform="translate(2119 736) rotate(-90)">42</text><text transform="translate(2119 765) rotate(-90)">44</text><text transform="translate(2119 794) rotate(-90)">46</text><text transform="translate(2119 822) rotate(-90)">48</text><text transform="translate(2119 851) rotate(-90)">50</text><text transform="translate(2119 880) rotate(-90)">52</text><text transform="translate(2119 937) rotate(-90)">56</text><text transform="translate(2119 965) rotate(-90)">58</text>
</g>

<!-- pages -->
<rect x="2156" y="168" width="729" height="799" fill="#fff"/><rect x="2155.500" y="168" width="1" height="799" fill="#c6c6c6"/><rect x="2885" y="168" width="1" height="799" fill="#c6c6c6"/>
<rect x="2902" y="168" width="729" height="799" fill="#fff"/><rect x="2901.500" y="168" width="1" height="799" fill="#c6c6c6"/><rect x="3631" y="168" width="1" height="799" fill="#c6c6c6"/>
<rect x="1752" y="967" width="1917" height="1" fill="#c6c6c6"/>
<rect x="3407" y="967" width="39" height="3" fill="#bdbdbd"/>

<!-- page 1 -->
<rect x="2232" y="186" width="3" height="5" fill="#000"/>
<text class="h" x="2243" y="191" font-size="18" font-weight="700" fill="#111" textLength="104" lengthAdjust="spacingAndGlyphs">（一） 投标函</text>
<rect x="2570" y="276" width="232" height="16" fill="#00ffff"/>
<rect x="2313" y="340" width="137" height="17" fill="#00ffff"/>
<g class="s w">
<text x="2258" y="221.500" textLength="245" lengthAdjust="spacingAndGlyphs">（招标人名称）：北方华锦联合石化有限公司</text>
<text x="2259" y="254.500" textLength="113" lengthAdjust="spacingAndGlyphs">1.我方已仔细研究了</text>
<text x="2380" y="254.500" textLength="377" lengthAdjust="spacingAndGlyphs">精细化工及原料工程项目特种作业和特种设备作业取证培训服务采购</text>
<text x="2767" y="254.500" textLength="35" lengthAdjust="spacingAndGlyphs">（招标</text>
<text x="2240" y="287.500" textLength="329" lengthAdjust="spacingAndGlyphs">项目名称）采购招标项目招标文件的全部内容，愿意以人民币</text>
<text x="2571" y="287.500" textLength="39" lengthAdjust="spacingAndGlyphs">(大写)</text>
<text x="2726" y="287.500" textLength="13" lengthAdjust="spacingAndGlyphs">(¥</text>
<text x="2790" y="287.500" textLength="6" lengthAdjust="spacingAndGlyphs">)</text>
<text x="2240" y="319.500" textLength="562" lengthAdjust="spacingAndGlyphs">的投标报价(1标段投标报价=1.2标段报价表中1标段含税投标报价 ；2标段投标报价=2标段含税投标报</text>
<text x="2240" y="352.500" textLength="32" lengthAdjust="spacingAndGlyphs">价 ），</text>
<text x="2278" y="352.500" textLength="33" lengthAdjust="spacingAndGlyphs">其中，</text>
<text x="2314" y="352.500" textLength="75" lengthAdjust="spacingAndGlyphs">增值税税率为</text>
<text x="2441" y="352.500">。</text>
<text x="2451" y="352.500" textLength="24" lengthAdjust="spacingAndGlyphs">提供</text>
<text x="2489" y="352.500" textLength="313" lengthAdjust="spacingAndGlyphs">精细化工及原料工程项目特种作业和特种设备作业取证培</text>
<text x="2240" y="384.500" textLength="62" lengthAdjust="spacingAndGlyphs">训服务采购</text>
<text x="2318" y="384.500" textLength="218" lengthAdjust="spacingAndGlyphs">（相关服务），并按合同约定履行义务。</text>
<text x="2252" y="416.500" textLength="183" lengthAdjust="spacingAndGlyphs">2.我方的投标文件包括下列内容：</text>
<text x="2258" y="449.500" textLength="144" lengthAdjust="spacingAndGlyphs">（1）投标函及投标函附录；</text>
<text x="2258" y="481.500" textLength="220" lengthAdjust="spacingAndGlyphs">（2）法定代表人身份证明或授权委托书；</text>
<text x="2258" y="514.500" textLength="157" lengthAdjust="spacingAndGlyphs">（3）联合体协议书（如有）；</text>
<text x="2258" y="546.500" textLength="95" lengthAdjust="spacingAndGlyphs">（4）投标保证金；</text>
<text x="2258" y="579.500" textLength="182" lengthAdjust="spacingAndGlyphs">（5）投标报价表（分项报价表）；</text>
<text x="2258" y="611.500" textLength="105" lengthAdjust="spacingAndGlyphs">（6）资格审查资料；</text>
<text x="2258" y="644.500" textLength="83" lengthAdjust="spacingAndGlyphs">（7）服务方案；</text>
<text x="2258" y="676.500" textLength="76" lengthAdjust="spacingAndGlyphs">（8）其他资料</text>
<text x="2253" y="706" textLength="23" lengthAdjust="spacing">......</text>
<text x="2266" y="742.500" textLength="525" lengthAdjust="spacingAndGlyphs">投标文件的上述组成部分如存在内容不一致的，除评标委员会按照招标文件规定的方法进行价格</text>
<text x="2240" y="776.500" textLength="172" lengthAdjust="spacingAndGlyphs">修正的情况外，以投标函为准。</text>
<text x="2252" y="808.500" textLength="447" lengthAdjust="spacingAndGlyphs">3.我方承诺响应招标文件规定的投标有效期，并在投标有效期内不撤销投标文件。</text>
<text x="2252" y="840.500" textLength="146" lengthAdjust="spacingAndGlyphs">4.如我方中标，我方承诺：</text>
<text x="2258" y="872.500" textLength="397" lengthAdjust="spacingAndGlyphs">（1）在收到中标通知书后，在中标通知书规定的期限内与你方签订合同；</text>
<text x="2258" y="904.500" textLength="234" lengthAdjust="spacingAndGlyphs">（2）在签订合同时不向你方提出附加条件；</text>
<text x="2503" y="942.500" fill="#808080" stroke="none" textLength="43" lengthAdjust="spacingAndGlyphs">7 / 549</text>
</g>
<g fill="#000"><rect x="2372" y="256" width="392" height="1"/><rect x="2611" y="289" width="107" height="1"/><rect x="2739" y="289" width="50" height="1"/><rect x="2389" y="354" width="50" height="1"/><rect x="2476" y="354" width="326" height="1"/><rect x="2240" y="386" width="74" height="1"/></g>
<path d="M2391 225q1.500 -2 3 0t3 0t3 0t3 0t3 0t3 0t3 0t3 0t3 0t3 0t3 0t3 0t3 0" fill="none" stroke="#3a6fd0" stroke-width=".8"/>
<g class="a">
<text x="2349" y="188">↵</text><text x="2507" y="221">↵</text><text x="2545" y="384">↵</text><text x="2445" y="416">↵</text><text x="2413" y="449">↵</text><text x="2489" y="481">↵</text><text x="2425" y="514">↵</text><text x="2363" y="546">↵</text><text x="2451" y="579">↵</text><text x="2375" y="611">↵</text><text x="2351" y="644">↵</text><text x="2337" y="676">↵</text><text x="2282" y="708">↵</text><text x="2420" y="776">↵</text><text x="2708" y="808">↵</text><text x="2407" y="840">↵</text><text x="2664" y="872">↵</text><text x="2501" y="904">↵</text><text x="2547" y="942">↵</text>
</g>
<rect x="2295" y="303.500" width="544" height="26" fill="none" stroke="#cb1227" stroke-width="3.500"/>
<rect x="2228" y="335.500" width="55" height="31" fill="none" stroke="#cb1227" stroke-width="3.500"/>
<path d="M2219 911H2239V932M2821 911H2801V932" fill="none" stroke="#aaa"/>

<!-- page 2 -->
<g class="s w">
<text x="3002" y="179.500" textLength="278" lengthAdjust="spacingAndGlyphs">（4）在合同约定的期限内完成合同规定的全部义务。</text>
<text x="2998" y="212.500" textLength="547" lengthAdjust="spacingAndGlyphs">5.我方在此声明，所递交的投标文件及有关资料内容完整、真实和准确，且不存在 第二章“投标人</text>
<text x="2987" y="244.500" textLength="209" lengthAdjust="spacingAndGlyphs">须知”第1.4.3项规定的任何一种情形。</text>
<text x="2998" y="277.500">6.</text>
<text x="3045" y="277.500">/</text>
<text x="3084" y="277.500" textLength="104" lengthAdjust="spacingAndGlyphs">（其他补充说明）。</text>
<text x="2987" y="358.500" textLength="330" lengthAdjust="spacingAndGlyphs">投标人：（盖单位章）盘锦市兴隆台区辽河成人教育培训中心</text>
<text x="2987" y="391.500" textLength="157" lengthAdjust="spacingAndGlyphs">法定代表人或其委托代理人：</text>
<text x="3260" y="391.500" textLength="41" lengthAdjust="spacingAndGlyphs">（签字）</text>
<text x="2987" y="423.500" textLength="31" lengthAdjust="spacingAndGlyphs">地址：</text>
<text x="3036" y="423.500" textLength="207" lengthAdjust="spacingAndGlyphs">辽宁省盘锦市兴隆台区北环北街 58 号</text>
<text x="2987" y="461.500" textLength="31" lengthAdjust="spacingAndGlyphs">网址：</text><text x="3124" y="461.500">/</text>
<text x="2987" y="498.500" textLength="31" lengthAdjust="spacingAndGlyphs">电话：</text><text x="3092" y="498.500" textLength="68" lengthAdjust="spacingAndGlyphs">18609873321</text>
<text x="2987" y="535.500" textLength="31" lengthAdjust="spacingAndGlyphs">传真：</text><text x="3118" y="535.500">/</text>
<text x="2987" y="572.500" textLength="55" lengthAdjust="spacingAndGlyphs">邮政编码：</text><text x="3104" y="572.500" textLength="38" lengthAdjust="spacingAndGlyphs">124010</text>
<text x="3429" y="669.500" textLength="25" lengthAdjust="spacingAndGlyphs">2025</text><text x="3461" y="669.500">年</text><text x="3479" y="669.500" textLength="13" lengthAdjust="spacingAndGlyphs">06</text><text x="3498" y="669.500">月</text><text x="3517" y="669.500" textLength="13" lengthAdjust="spacingAndGlyphs">27</text><text x="3536" y="669.500">日</text>
<text x="3248" y="942.500" fill="#808080" stroke="none" textLength="44" lengthAdjust="spacingAndGlyphs">8 / 549</text>
</g>
<g fill="#000"><rect x="3012" y="279" width="68" height="1"/><rect x="3149" y="394" width="107" height="1"/><rect x="3023" y="426" width="232" height="1"/><rect x="3023" y="463" width="237" height="1"/><rect x="3023" y="500" width="237" height="1"/><rect x="3023" y="537" width="238" height="1"/><rect x="3047" y="574" width="213" height="1"/><rect x="3422" y="671" width="38" height="1"/><rect x="3472" y="671" width="25" height="1"/><rect x="3511" y="671" width="24" height="1"/></g>
<g class="a">
<text x="3293" y="179">↵</text><text x="3205" y="244">↵</text><text x="3192" y="277">↵</text><text x="2986" y="309">↵</text><text x="2986" y="334">↵</text><text x="3318" y="358">↵</text><text x="3306" y="391">↵</text><text x="3255" y="423">↵</text><text x="3260" y="461">↵</text><text x="3260" y="498">↵</text><text x="3261" y="535">↵</text><text x="3260" y="572">↵</text><text x="2986" y="604">↵</text><text x="2986" y="637">↵</text><text x="3548" y="669">↵</text><text x="2986" y="694">↵</text><text x="2986" y="719">↵</text><text x="2986" y="743">↵</text><text x="2986" y="767">↵</text><text x="2986" y="792">↵</text><text x="2986" y="817">↵</text><text x="2986" y="841">↵</text><text x="2986" y="865">↵</text><text x="2986" y="890">↵</text><text x="3293" y="942">↵</text>
</g>
<path d="M2965 911H2986V932M3569 911H3548V932" fill="none" stroke="#aaa"/>
<!-- logo -->
<circle cx="3652" cy="909" r="20" fill="#e4f2ea"/>
<circle cx="3650" cy="909" r="15" fill="#80d3a0"/>
<path d="M3656 896C3646 898 3646 904 3650 908C3654 913 3652 918 3644 922" fill="none" stroke="#fff" stroke-width="3"/>
</svg>
</body></html>
